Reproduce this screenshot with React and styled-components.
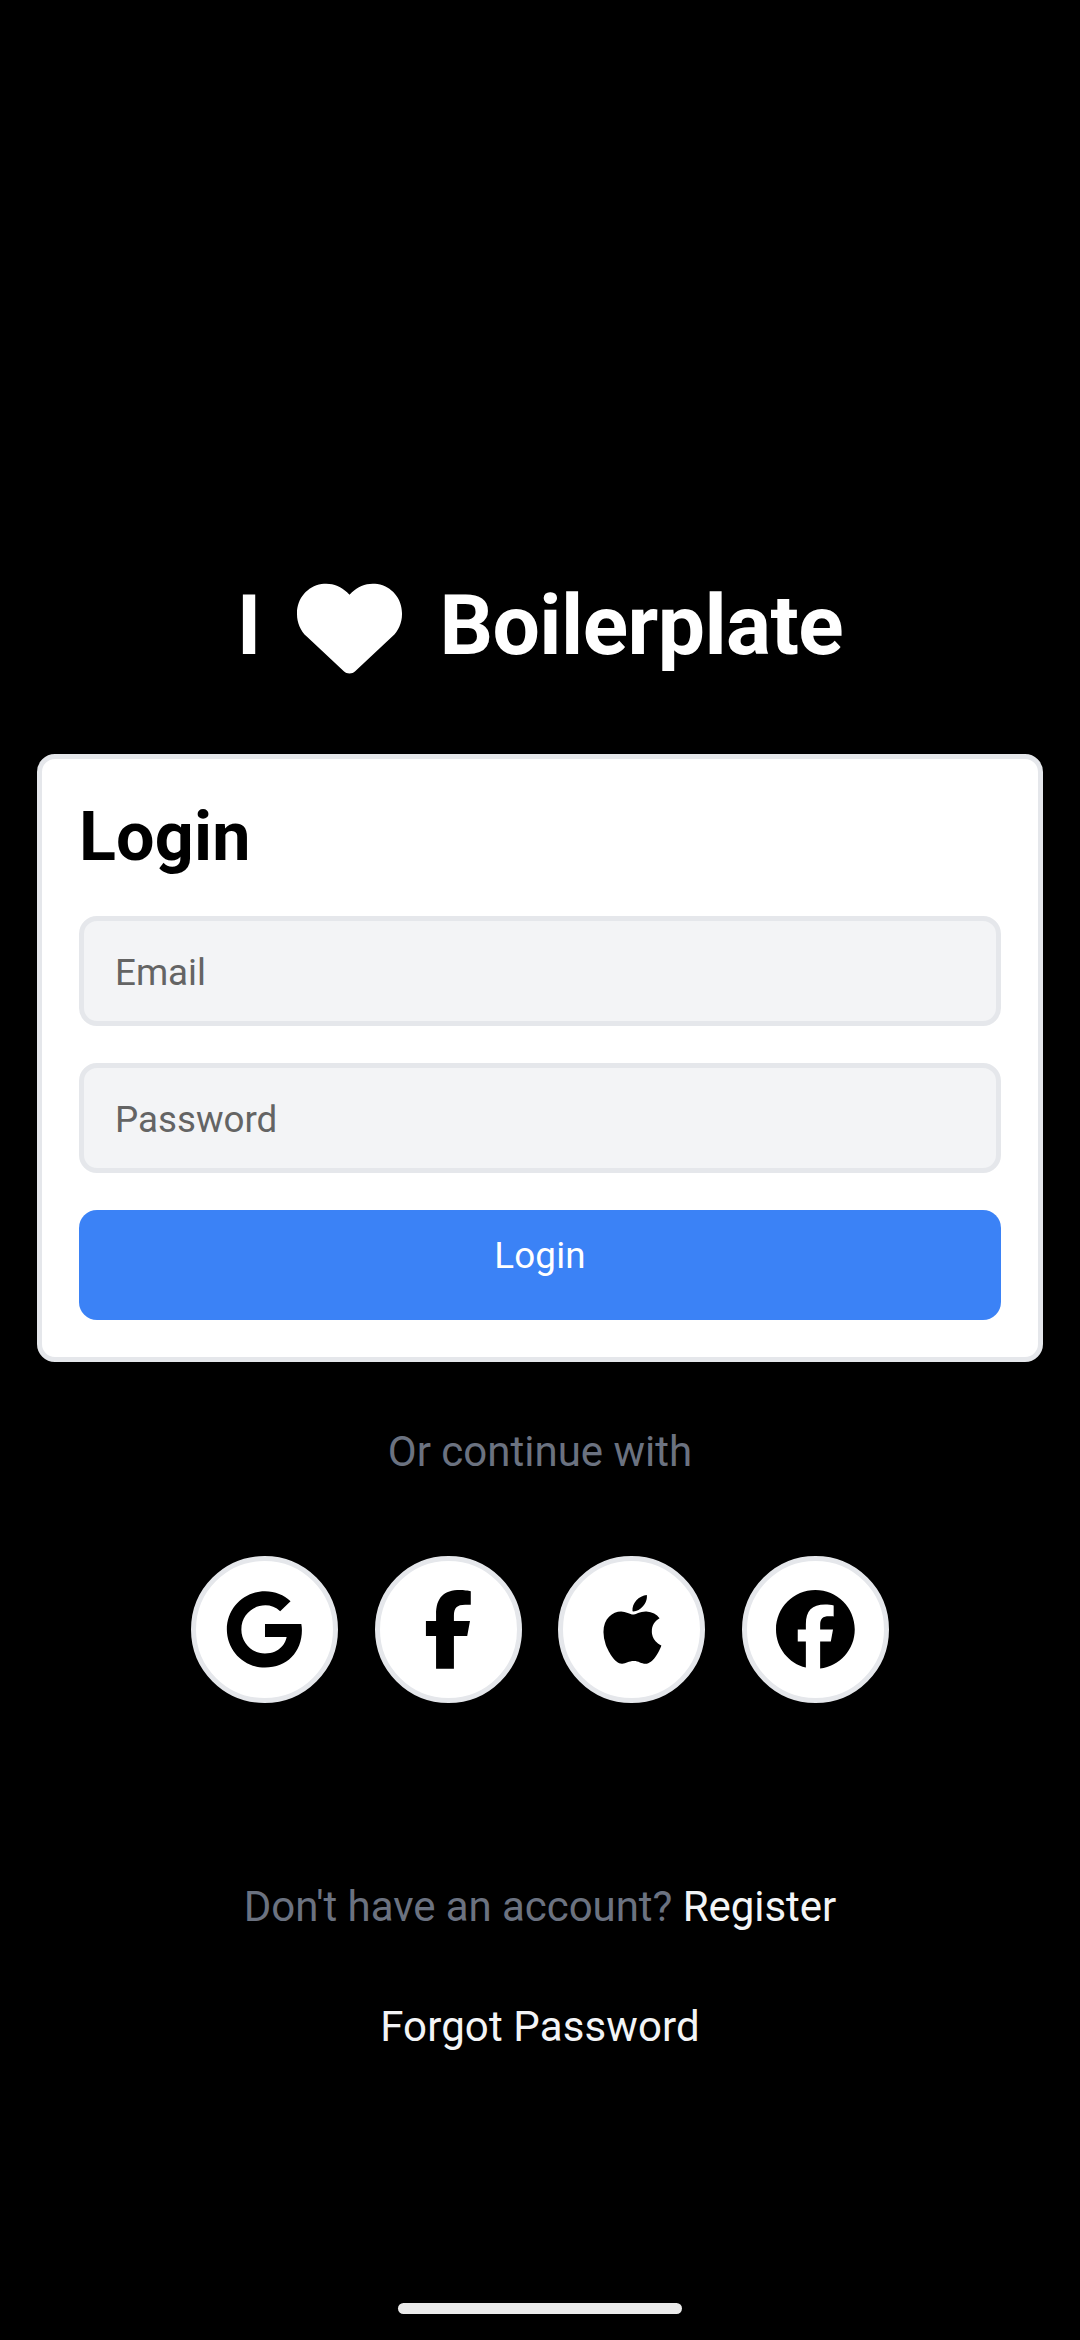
import React from "react";
import styled, { createGlobalStyle } from "styled-components";
import { FaApple, FaFacebook, FaFacebookF, FaGoogle, FaHeart } from "react-icons/fa6";

const GlobalStyle = createGlobalStyle`
  *, *::before, *::after { box-sizing: border-box; }
  html, body { margin: 0; background: #000; }
`;

const Screen = styled.main`
  display: flex;
  flex-direction: column;
  align-items: center;
  width: 1080px;
  height: 2340px;
  padding: 565px 37px 26px;
  overflow: hidden;
  background: #000;
  font-family: Roboto, "Liberation Sans", sans-serif;
`;

const Brand = styled.h1`
  display: flex;
  align-items: center;
  justify-content: center;
  height: 125px;
  margin: 0 0 64px;
  color: #fff;
  font-size: 84px;
  font-weight: 700;
  line-height: 121px;
  letter-spacing: -0.55px;

  svg { margin: 0 37px 0 36.5px; }
`;

const BrandWord = styled.span`
  display: block;
  margin-top: -4px;
`;

const Card = styled.form`
  display: flex;
  flex-direction: column;
  gap: 37px;
  width: 1006px;
  height: 608px;
  padding: 37px;
  background: #fff;
  border: 5px solid #e5e7eb;
  border-radius: 18px;
`;

const Heading = styled.h2`
  height: 83px;
  margin: 0;
  color: #000;
  font-size: 68.25px;
  font-weight: 700;
  line-height: 82px;
  letter-spacing: 0.2px;
`;

const Field = styled.input`
  display: block;
  width: 100%;
  height: 110px;
  padding: 3px 31px 0;
  background: #f3f4f6;
  border: 5px solid #e5e7eb;
  border-radius: 18px;
  outline: none;
  color: #000;
  font: 400 36.75px Roboto, "Liberation Sans", sans-serif;

  &::placeholder { color: #646464; opacity: 1; }
`;

const SubmitButton = styled.button`
  display: flex;
  align-items: flex-start;
  justify-content: center;
  height: 110px;
  padding: 18px 0 0;
  background: #3b82f6;
  border: 0;
  border-radius: 18px;
  color: #fff;
  font: 400 36.75px/55px Roboto, "Liberation Sans", sans-serif;
  letter-spacing: 0.2px;
`;

const Line = styled.p`
  margin: ${({ $top }) => $top}px 0 0;
  color: #6b7280;
  font-size: 42px;
  line-height: 59px;
  letter-spacing: ${({ $tracking = 0 }) => $tracking}px;
  white-space: pre;
`;

const TextLink = styled.span`
  color: #f3f4f6;
`;

const SocialRow = styled.div`
  display: flex;
  gap: 36.75px;
  margin-top: 75px;
`;

const SocialButton = styled.button`
  display: flex;
  align-items: center;
  justify-content: center;
  width: 147px;
  height: 147px;
  padding: 0;
  background: #fff;
  border: 5px solid #e5e7eb;
  border-radius: 50%;
  color: #000;
`;

const HomeIndicator = styled.div`
  width: 284px;
  height: 11px;
  margin-top: auto;
  background: #ebebeb;
  border-radius: 6px;
`;

const providers = [
  { name: "Google", Icon: FaGoogle },
  { name: "Facebook", Icon: FaFacebookF },
  { name: "Apple", Icon: FaApple },
  { name: "Facebook account", Icon: FaFacebook },
];

export default function App() {
  return (
    <>
      <GlobalStyle />
      <Screen>
        <Brand>
          <BrandWord>I</BrandWord>
          <FaHeart size={105} />
          <BrandWord>Boilerplate</BrandWord>
        </Brand>
        <Card onSubmit={(event) => event.preventDefault()}>
          <Heading>Login</Heading>
          <Field type="email" placeholder="Email" />
          <Field type="password" placeholder="Password" />
          <SubmitButton type="submit">Login</SubmitButton>
        </Card>
        <Line $top={60}>Or continue with</Line>
        <SocialRow>
          {providers.map(({ name, Icon }) => (
            <SocialButton key={name} type="button">
              <Icon size={78.75} />
            </SocialButton>
          ))}
        </SocialRow>
        <Line $top={174} $tracking={-0.05}>
          Don't have an account? <TextLink>Register</TextLink>
        </Line>
        <Line $top={61} $tracking={0.12}>
          <TextLink>Forgot Password</TextLink>
        </Line>
        <HomeIndicator />
      </Screen>
    </>
  );
}
